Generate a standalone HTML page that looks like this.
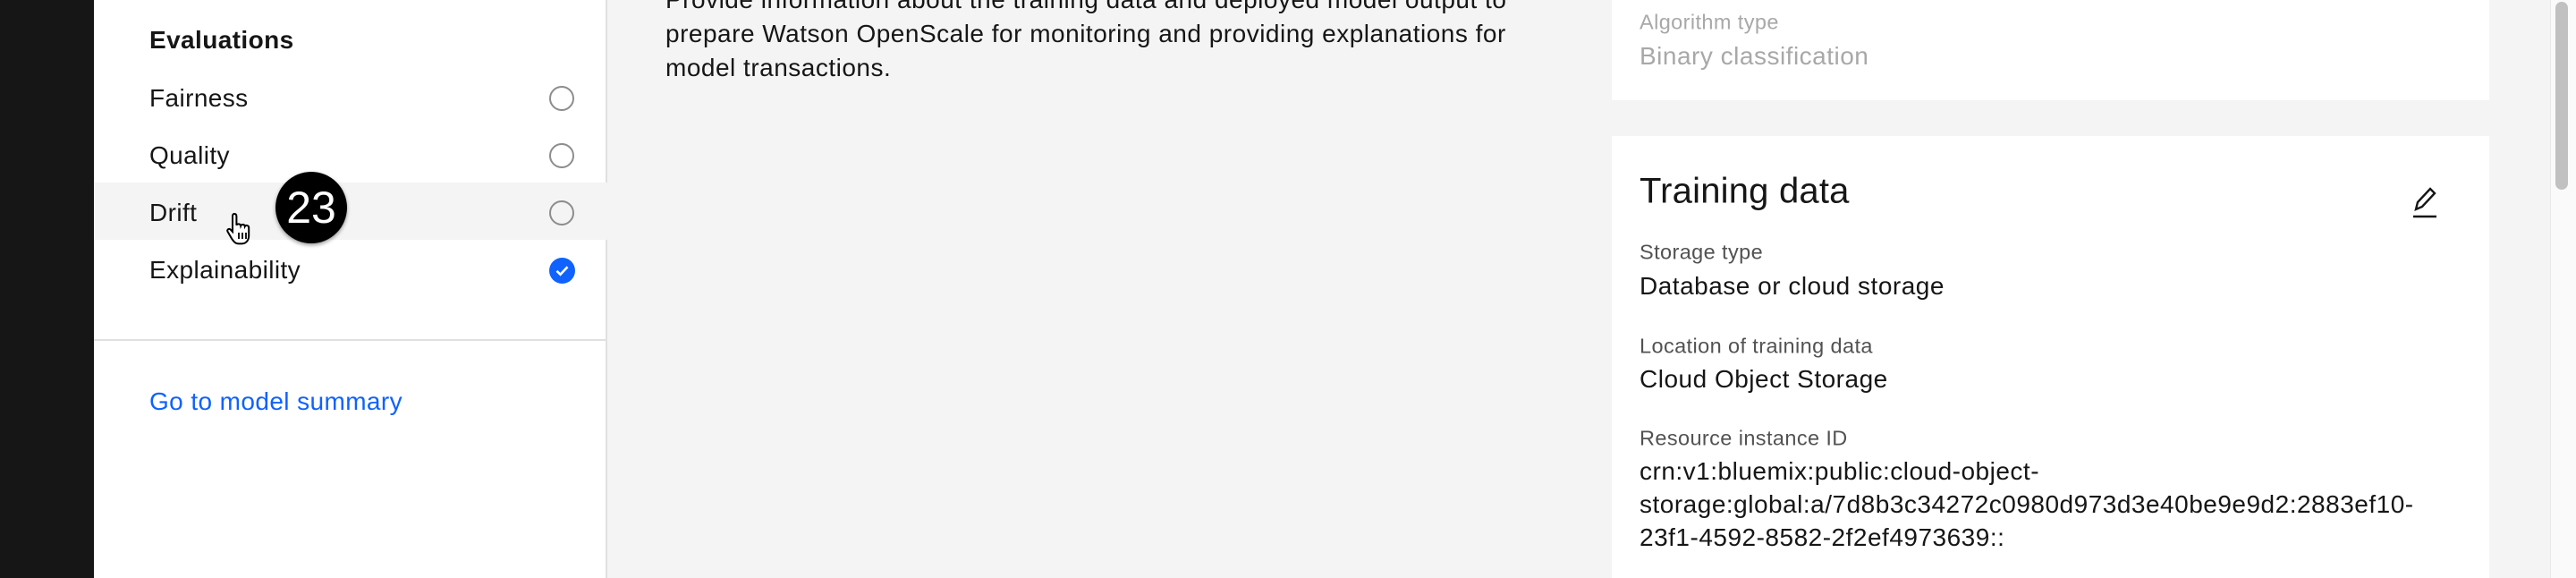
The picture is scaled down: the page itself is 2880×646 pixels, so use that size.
<!DOCTYPE html>
<html><head><meta charset="utf-8"><style>
*{margin:0;padding:0;box-sizing:border-box}
body{width:2880px;height:646px;overflow:hidden;background:#f4f4f4;font-family:"Liberation Sans",sans-serif;color:#161616;position:relative}
.a{position:absolute;white-space:nowrap}
.dark{left:0;top:0;width:105px;height:646px;background:#161616}
.side{left:105px;top:0;width:574px;height:646px;background:#fff;border-right:2px solid #e0e0e0}
.item{font-size:28px;letter-spacing:0.4px;left:167px;transform:translateY(-50%)}
.circ{left:614px;width:28px;height:28px;border:2px solid #8d8d8d;border-radius:50%;transform:translateY(-50%)}
.lbl{font-size:23.5px;letter-spacing:0.4px;color:#525252;left:1833px;transform:translateY(-50%)}
.val{font-size:28px;letter-spacing:0.5px;left:1833px;transform:translateY(-50%)}
</style></head><body>
<div class="a dark"></div>
<div class="a side"></div>
<div class="a" style="left:105px;top:204px;width:574px;height:64px;background:#f4f4f4"></div>
<div class="a item" style="top:45px;font-weight:bold;letter-spacing:0.4px">Evaluations</div>
<div class="a item" style="top:110px">Fairness</div>
<div class="a item" style="top:174px">Quality</div>
<div class="a item" style="top:238px">Drift</div>
<div class="a item" style="top:302px">Explainability</div>
<div class="a circ" style="top:110px"></div>
<div class="a circ" style="top:174px"></div>
<div class="a circ" style="top:238px"></div>
<div class="a" style="left:614px;top:288px;width:29px;height:29px;border-radius:50%;background:#0f62fe">
<svg width="29" height="29" viewBox="0 0 29 29"><path d="M8.5 14.8l4 4 8-8.5" fill="none" stroke="#fff" stroke-width="2.6"/></svg></div>
<div class="a" style="left:105px;top:379px;width:574px;height:2px;background:#e0e0e0"></div>
<div class="a item" style="top:449px;color:#0f62fe">Go to model summary</div>
<div class="a" style="left:308px;top:192px;width:80px;height:80px;border-radius:50%;background:#000;color:#fff;font-size:50px;line-height:80px;text-align:center;box-shadow:0 2px 4px rgba(0,0,0,.4)">23</div>
<svg class="a" style="left:252px;top:236px" width="34" height="40" viewBox="0 0 17 20"><path d="M5 1.5c1 0 1.2.6 1.2 1.4v5c.3-1 2.2-1 2.4.3.4-1 2.2-.9 2.3.3.5-.9 2.2-.6 2.2.7v4.5c0 2.5-1.5 4.5-4 4.5H7.5c-1.8 0-2.7-1-3.8-2.6L1.3 11.5c-.6-1 .5-2 1.5-1.3L4 11.5V2.9c0-.8.3-1.4 1-1.4z" fill="#fff" stroke="#000" stroke-width="1"/><path d="M7.5 12v3.5M9.5 12v3.5M11.5 12v3.5" stroke="#000" stroke-width="0.9"/></svg>
<div class="a" style="left:744px;top:-19px;font-size:28px;letter-spacing:0.5px;line-height:38px">Provide information about the training data and deployed model output to<br>prepare Watson OpenScale for monitoring and providing explanations for<br>model transactions.</div>
<div class="a" style="left:1802px;top:0;width:981px;height:112px;background:#fff"></div>
<div class="a" style="left:1802px;top:152px;width:981px;height:494px;background:#fff"></div>
<div class="a lbl" style="top:25px;color:#a8a8a8">Algorithm type</div>
<div class="a val" style="top:63px;color:#a8a8a8">Binary classification</div>
<div class="a" style="left:1833px;top:214px;font-size:40px;letter-spacing:0.2px;transform:translateY(-50%)">Training data</div>
<svg class="a" style="left:2694px;top:206px" width="34" height="40" viewBox="0 0 17 20"><path d="M3.5 14l1-4 7-7.5 2.5 2.5-7 7.5z" fill="none" stroke="#161616" stroke-width="1.2"/><path d="M2 18h13" stroke="#161616" stroke-width="1.3"/></svg>
<div class="a lbl" style="top:282px">Storage type</div>
<div class="a val" style="top:320px">Database or cloud storage</div>
<div class="a lbl" style="top:387px">Location of training data</div>
<div class="a val" style="top:424px">Cloud Object Storage</div>
<div class="a lbl" style="top:490px">Resource instance ID</div>
<div class="a val" style="top:527px">crn:v1:bluemix:public:cloud-object-</div>
<div class="a val" style="top:564px">storage:global:a/7d8b3c34272c0980d973d3e40be9e9d2:2883ef10-</div>
<div class="a val" style="top:601px">23f1-4592-8582-2f2ef4973639::</div>
<div class="a" style="left:2851px;top:0;width:29px;height:646px;background:#fafafa;border-left:1px solid #e8e8e8"></div>
<div class="a" style="left:2857px;top:2px;width:14px;height:210px;background:#c1c1c1;border-radius:7px"></div>
</body></html>
